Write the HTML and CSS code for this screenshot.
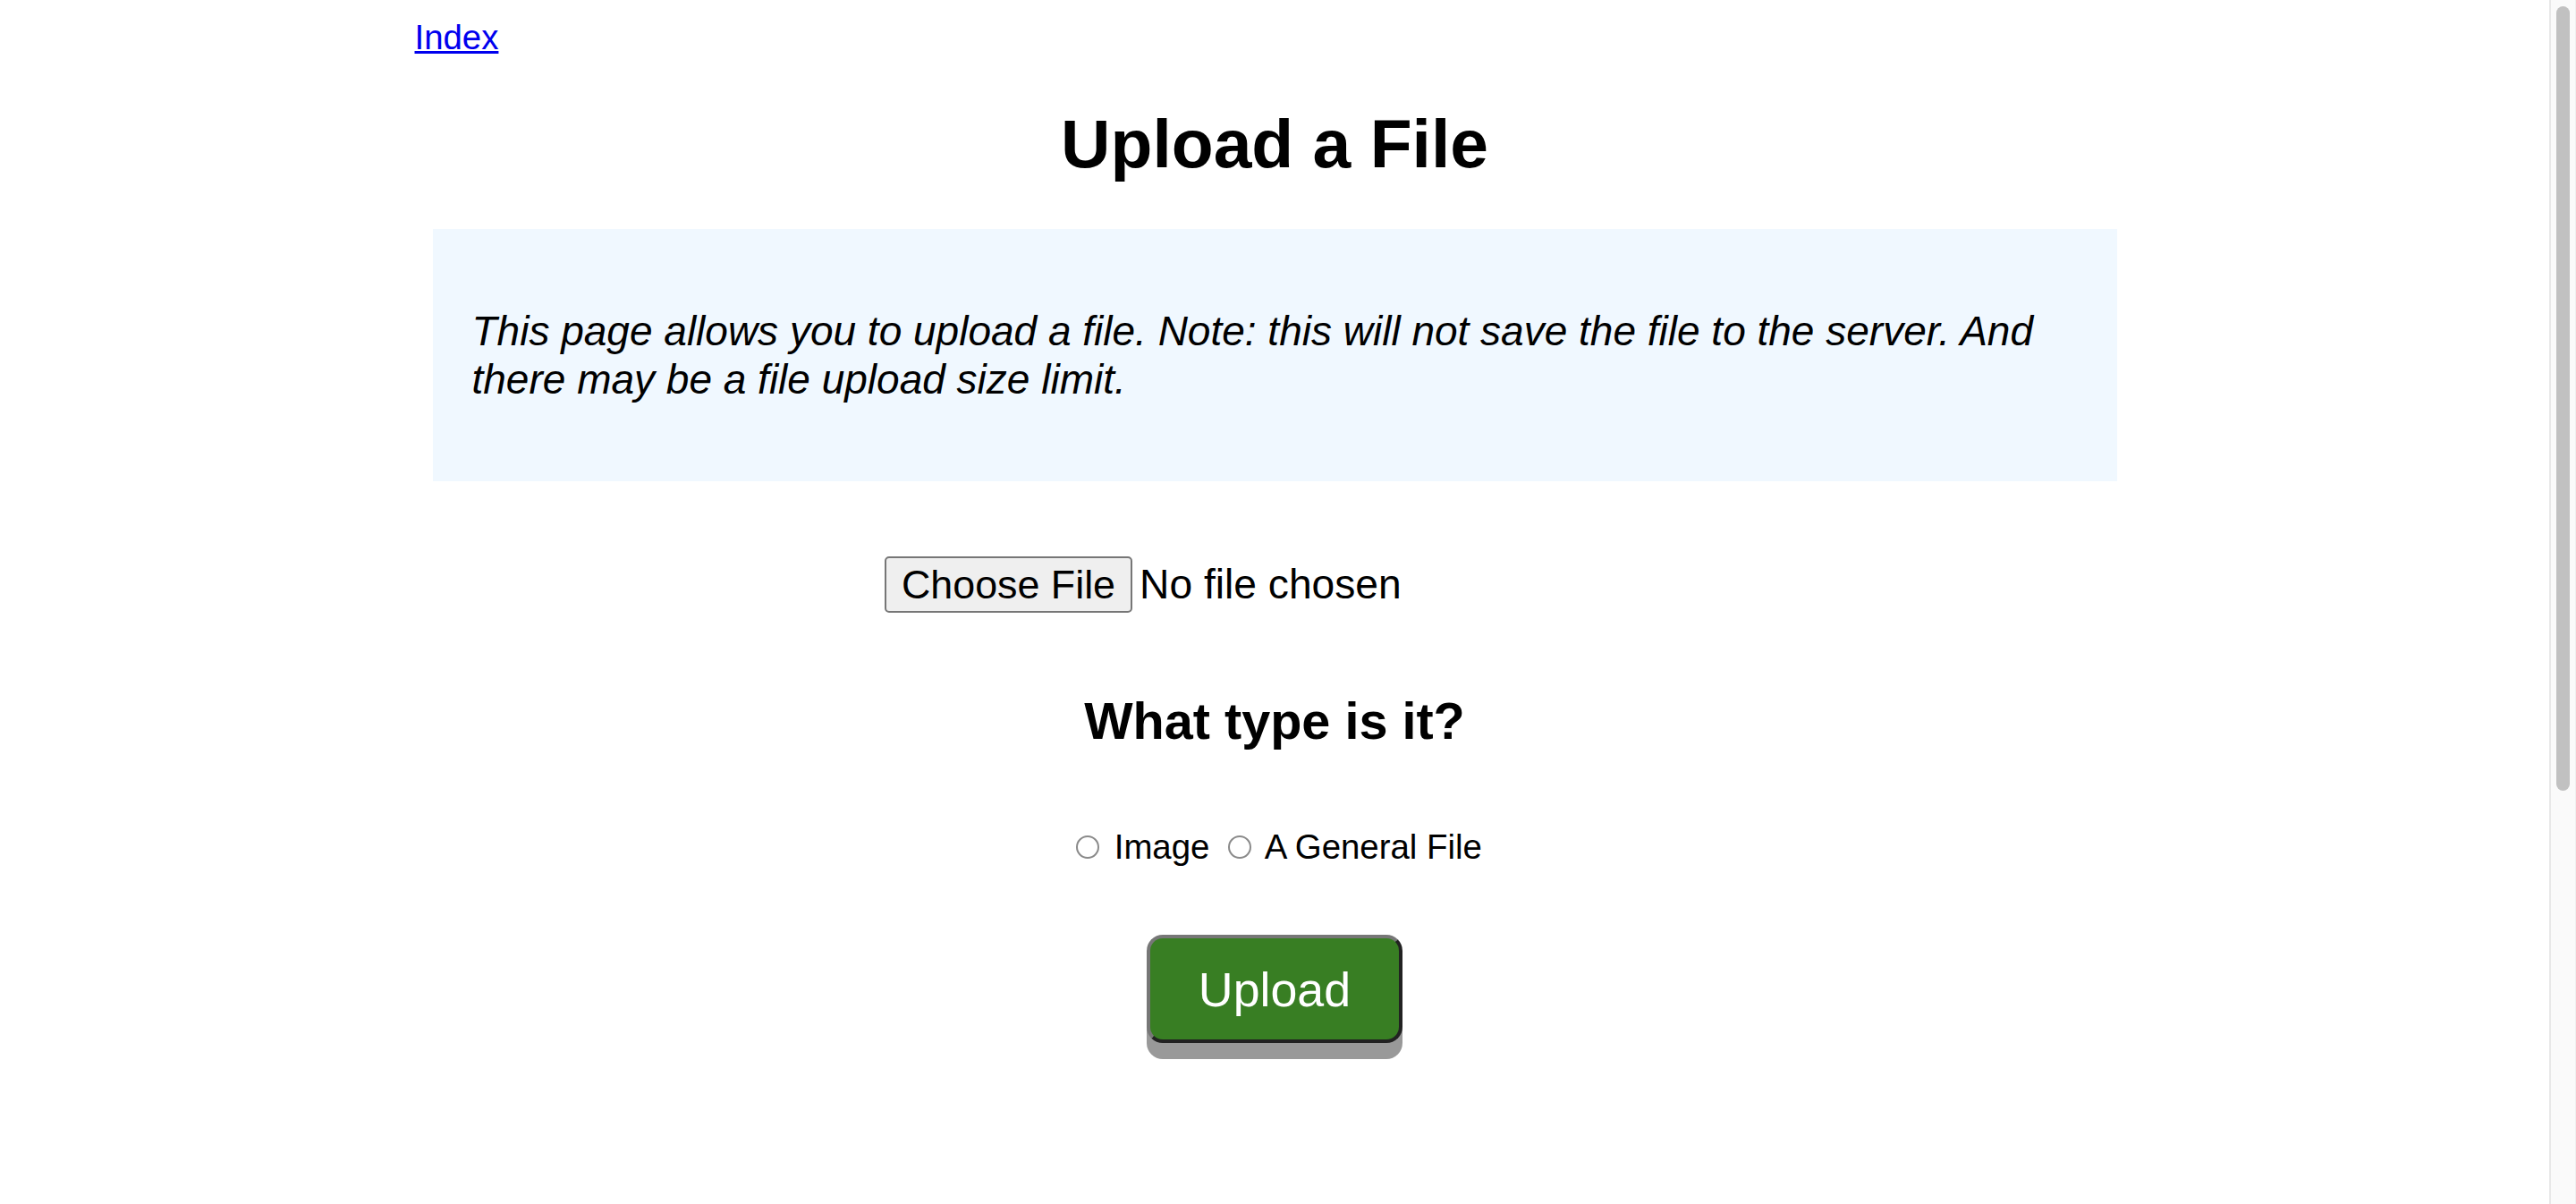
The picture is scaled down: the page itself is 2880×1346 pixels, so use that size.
FILE: index.html
```html
<!DOCTYPE html>
<html lang="en">
<head>
<meta charset="utf-8">
<title>Upload a File</title>
<link rel="stylesheet" href="styles.css">
</head>
<body>
<div class="main">
  <div class="page">
    <nav class="top"><a href="#" class="index-link">Index</a></nav>
    <h1 class="title">Upload a File</h1>
    <div class="explain">
      <p class="explain-text">This page allows you to upload a file. Note: this will not save the file to the server. And there may be a file upload size limit.</p>
    </div>
    <form class="upload-form">
      <div class="file-row">
        <label class="file-picker"><input type="file" class="file-input"><span class="file-btn">Choose File</span><span class="file-name">No file chosen</span></label>
      </div>
      <h2 class="type-title">What type is it?</h2>
      <div class="type-row"><label class="type-opt"><input type="radio" name="filetype" class="radio"> Image</label> <label class="type-opt"><input type="radio" name="filetype" class="radio"> A General File</label></div>
      <div class="submit-row"><button type="button" class="upload-btn">Upload</button></div>
    </form>
  </div>
</div>
<div class="scrollbar" aria-hidden="true"><div class="scroll-thumb"></div></div>
</body>
</html>
```
FILE: styles.css
```css
body {
  margin: 0;
  display: flex;
  background: #fff;
  color: #000;
  font-family: "Liberation Sans", Arial, Helvetica, sans-serif;
  font-size: 38.4px;
}

.main {
  flex: 1;
  min-width: 0;
}

.scrollbar {
  flex: 0 0 30px;
  box-sizing: border-box;
  height: 100vh;
  padding: 7px 6px 0 6px;
  border-left: 2px solid #e8e8e8;
  border-right: 1px solid #efefef;
  background: #fafafa;
}

.scroll-thumb {
  height: 877px;
  border-radius: 8px;
  background: #c1c1c1;
}

.page {
  width: 1923px;
  margin: 0 auto;
  padding-top: 20px;
}

.index-link {
  color: #0000ee;
  text-decoration: underline;
}

.title {
  margin: 51.5px 0;
  font-size: 76.8px;
  font-weight: bold;
  text-align: center;
}

.explain {
  margin: 0 20px;
  padding: 87px 44px;
  background: #f0f8ff;
}

.explain-text {
  margin: 0;
  font-size: 46px;
  font-style: italic;
}

.file-row {
  margin-top: 84px;
  display: flex;
  justify-content: center;
}

.file-picker {
  width: 872px;
  display: flex;
  align-items: baseline;
}

.file-input {
  display: none;
}

.file-btn {
  margin-right: 8px;
  padding: 4px 17px;
  border: 2px solid #767676;
  border-radius: 5px;
  background: #efefef;
  font-size: 44.8px;
}

.file-name {
  font-size: 46.2px;
}

.type-title {
  margin: 88px 0 0;
  font-size: 57.6px;
  font-weight: bold;
  text-align: center;
}

.type-row {
  margin-top: 86px;
  text-align: center;
}

.radio {
  -webkit-appearance: none;
  appearance: none;
  box-sizing: border-box;
  width: 26px;
  height: 26px;
  margin: 6px 6px 0 10px;
  border: 2px solid #8a8a8a;
  border-radius: 50%;
  background: #fff;
  vertical-align: baseline;
}

.submit-row {
  margin-top: 76px;
  text-align: center;
}

.upload-btn {
  padding: 25.5px 54px;
  border: 4px solid;
  border-color: #777 #222 #222 #777;
  border-radius: 18px;
  background: #387e23;
  box-shadow: 0 18px 0 #999;
  color: #fff;
  font-family: inherit;
  font-size: 53.76px;
  line-height: normal;
}
```
